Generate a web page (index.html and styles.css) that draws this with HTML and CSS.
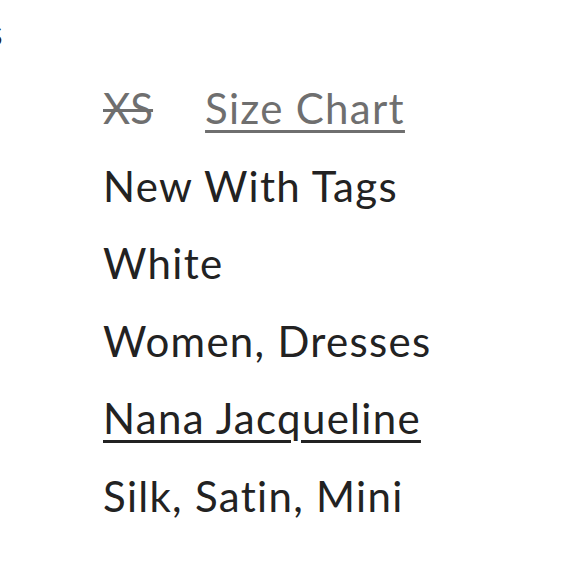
FILE: index.html
```html
<!DOCTYPE html>
<html>
<head>
<meta charset="utf-8">
<link rel="stylesheet" href="styles.css">
</head>
<body>
<div class="page">
  <div class="cut-label">s</div>
  <ul class="details">
    <li class="row size-row"><span class="size">XS</span><a class="chart" href="#">Size Chart</a></li>
    <li class="row">New With Tags</li>
    <li class="row">White</li>
    <li class="row">Women, Dresses</li>
    <li class="row"><a class="brand" href="#">Nana Jacqueline</a></li>
    <li class="row">Silk, Satin, Mini</li>
  </ul>
</div>
</body>
</html>
```
FILE: styles.css
```css
html, body {
  margin: 0;
  padding: 0;
  background: #ffffff;
}
body {
  font-family: "Lato", "Noto Sans", sans-serif;
  color: #222222;
  overflow: hidden;
  width: 580px;
  height: 580px;
  font-variant-ligatures: none;
}
.page {
  height: 580px;
}
.cut-label {
  font-size: 36px;
  line-height: 40px;
  margin-left: -13px;
  height: 40px;
  padding-top: 12px;
  color: #222222;
}
.details {
  list-style: none;
  margin: 0;
  padding: 18px 0 0 103px;
}
.row {
  font-size: 42px;
  line-height: 77.5px;
  height: 77.5px;
  white-space: nowrap;
  letter-spacing: 1.3px;
}
.size-row {
  display: flex;
  gap: 52px;
  color: #6f6f6f;
}
.size {
  letter-spacing: 0;
  text-decoration: line-through;
  text-decoration-thickness: 3px;
}
.chart {
  color: #6f6f6f;
  text-decoration: underline;
  text-decoration-thickness: 3px;
  text-underline-offset: 6px;
}
.brand {
  color: #222222;
  text-decoration: underline;
  text-decoration-thickness: 3px;
  text-underline-offset: 6px;
}
```
